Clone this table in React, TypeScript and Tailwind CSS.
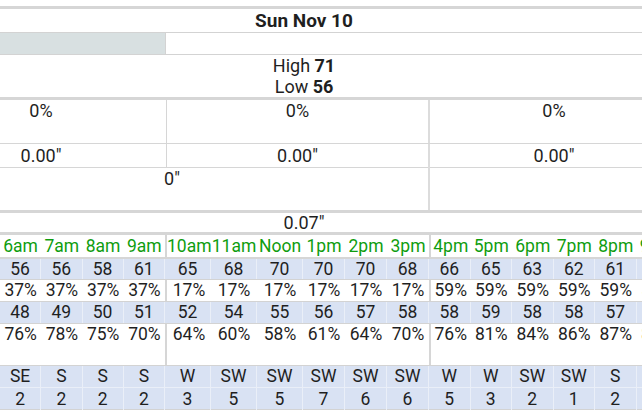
import React from "react";

const hours = ["6am", "7am", "8am", "9am", "10am", "11am", "Noon", "1pm", "2pm", "3pm", "4pm", "5pm", "6pm", "7pm", "8pm", "9pm"];
const temps = ["56", "56", "58", "61", "65", "68", "70", "70", "70", "68", "66", "65", "63", "62", "61", "60"];
const chance = ["37%", "37%", "37%", "37%", "17%", "17%", "17%", "17%", "17%", "17%", "59%", "59%", "59%", "59%", "59%", "59%"];
const dew = ["48", "49", "50", "51", "52", "54", "55", "56", "57", "58", "58", "59", "58", "58", "57", "57"];
const humidity = ["76%", "78%", "75%", "70%", "64%", "60%", "58%", "61%", "64%", "70%", "76%", "81%", "84%", "86%", "87%", "88%"];
const windDir = ["SE", "S", "S", "S", "W", "SW", "SW", "SW", "SW", "SW", "W", "W", "SW", "SW", "S", "S"];
const windSpeed = ["2", "2", "2", "2", "3", "5", "5", "7", "6", "6", "5", "3", "2", "1", "2", "2"];

const cols = "grid grid-cols-[repeat(4,41.25px)_46px_46px_46px_42px_42px_42px_repeat(6,41.5px)]";

// group starts get the divider
const isGroupStart = (i: number) => i === 4 || i === 10;

const WhiteRow = ({ values, className, green }: { values: string[]; className: string; green?: boolean }) => (
  <div className={`${cols} ${className}`}>
    {values.map((v, i) => (
      <div
        key={i}
        className={`text-center whitespace-nowrap ${isGroupStart(i) ? "border-l-2 border-[#d6d6d6]" : ""} ${green ? "text-[#0f9d0f]" : ""}`}
      >
        {v}
      </div>
    ))}
  </div>
);

const BlueRow = ({ values, className }: { values: string[]; className: string }) => (
  <div className={`${cols} bg-[#d9e2f3] ${className}`}>
    {values.map((v, i) => (
      <div key={i} className="text-center whitespace-nowrap border-r border-[#eaeff8]">
        {v}
      </div>
    ))}
  </div>
);

export default function App() {
  return (
    <div className="w-[642px] h-[414px] overflow-hidden bg-white font-['Roboto',sans-serif] text-[#1f1f1f]">
      <div className="w-[678px] pt-[6px]">
        {/* Day header */}
        <div className="border-t-[3px] border-[#d6d6d6] h-[26px] pr-[70px] text-center text-[19px] font-bold leading-[23px]">
          Sun Nov 10
        </div>

        <div className="flex h-[23px] border-y border-[#d3d3d3]">
          <div className="w-[166px] bg-[#d8e0e1] border-r border-[#d3d3d3]" />
        </div>

        <div className="h-[42px] pr-[70px] text-center text-[18px] leading-[21px]">
          High <b>71</b>
          <br />
          Low <b>56</b>
        </div>

        {/* Precip chance */}
        <div className="grid grid-cols-[166px_262px_250px] border-t-[3px] border-b border-[#d6d6d6] h-[47px] text-[18px] leading-[22px]">
          <div className="pr-[84px] text-center">0%</div>
          <div className="border-l border-[#d6d6d6] text-center">0%</div>
          <div className="border-l-2 border-[#dcdcdc] text-center">0%</div>
        </div>

        {/* Precip amount */}
        <div className="grid grid-cols-[166px_262px_250px] border-b border-[#d6d6d6] h-[24px] text-[18px] leading-[24px]">
          <div className="pr-[84px] text-center">0.00"</div>
          <div className="border-l border-[#d6d6d6] text-center">0.00"</div>
          <div className="border-l-2 border-[#dcdcdc] text-center">0.00"</div>
        </div>

        <div className="grid grid-cols-[428px_250px] h-[42px] text-[18px] leading-[21px]">
          <div className="pr-[84px] text-center">0"</div>
          <div className="border-l-2 border-[#dcdcdc]" />
        </div>

        <div className="border-y-[3px] border-[#d6d6d6] h-[25px] pr-[70px] text-center text-[18px] leading-[19px]">
          0.07"
        </div>

        {/* Hourly table */}
        <div className="text-[17.5px]">
          <WhiteRow values={hours} green className="h-[24px] leading-[22px] border-b-2 border-[#d6d6d6]" />
          <BlueRow values={temps} className="h-[21px] leading-[20px] border-b border-[#d3d3d3]" />
          <WhiteRow values={chance} className="h-[22px] leading-[21px] border-b border-[#d3d3d3]" />
          <BlueRow values={dew} className="h-[22px] leading-[21px] border-b border-[#d3d3d3]" />
          <WhiteRow values={humidity} className="h-[42px] leading-[21px] border-b border-[#d3d3d3]" />
          <BlueRow values={windDir} className="h-[22px] leading-[21px] border-b border-[#eaeff8]" />
          <BlueRow values={windSpeed} className="h-[22px] leading-[22px] border-b border-[#d3d3d3]" />
        </div>
      </div>
    </div>
  );
}
